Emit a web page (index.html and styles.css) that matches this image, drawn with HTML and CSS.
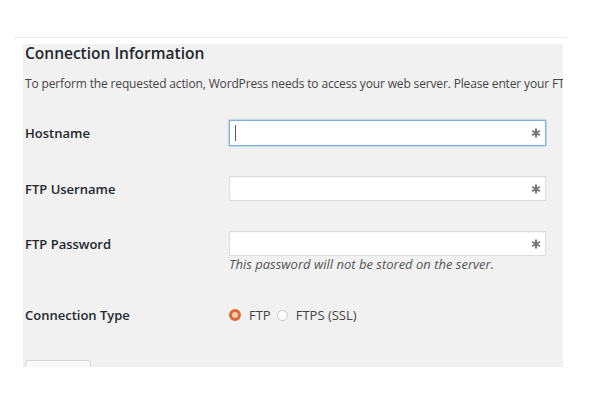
FILE: index.html
```html
<!DOCTYPE html>
<html><head>
<meta charset="UTF-8">
<title>Connection Information</title>
<link rel="stylesheet" href="styles.css">
</head>
<body>

<div class="page">
	<div class="rule"></div>

	<div class="panel">
		<h2 class="title">Connection Information</h2>
		<p class="intro">To perform the requested action, WordPress needs to access your web server. Please enter your FTP credentials to proceed.</p>

		<div class="form">
			<div class="row">
				<label class="label">Hostname</label>
				<div class="field focused"><span class="caret"></span><svg class="key" width="10" height="10" viewBox="0 0 10 10"><path d="M5 0.5V9.5M1.1 2.75L8.9 7.25M1.1 7.25L8.9 2.75"/></svg></div>
			</div>

			<div class="row">
				<label class="label">FTP Username</label>
				<div class="field"><span></span><svg class="key" width="10" height="10" viewBox="0 0 10 10"><path d="M5 0.5V9.5M1.1 2.75L8.9 7.25M1.1 7.25L8.9 2.75"/></svg></div>
			</div>

			<div class="row row_last">
				<label class="label">FTP Password</label>
				<div class="field"><span></span><svg class="key" width="10" height="10" viewBox="0 0 10 10"><path d="M5 0.5V9.5M1.1 2.75L8.9 7.25M1.1 7.25L8.9 2.75"/></svg></div>
			</div>
			<div class="hint">This password will not be stored on the server.</div>

			<div class="row row_type">
				<label class="label">Connection Type</label>
				<div class="choices">
					<span class="radio checked"></span><span class="choice">FTP</span>
					<span class="radio"></span><span class="choice">FTPS (SSL)</span>
				</div>
			</div>
		</div>

		<div class="button"></div>
	</div>
</div>

</body></html>
```

FILE: styles.css
```css
BODY {
	margin:0px;
	padding:0px;
	background:#ffffff;
	font-family:"Open Sans", "Noto Sans", sans-serif;
	color:#32373c;
}

.page {
	padding-top:37px;
}

.rule {
	margin-left:14px;
	width:553px;
	height:1px;
	background:#ececec;
}

/* grey settings box */
.panel {
	margin-left:23px;
	margin-top:6px;
	width:538px;
	height:323px;
	padding-left:2px;
	overflow:hidden;
	background:#f1f1f1;
}

.title {
	margin:0px;
	font-size:15.5px;
	line-height:18px;
	font-weight:600;
	color:#23282d;
}

.intro {
	margin:13px 0px 0px 0px;
	font-size:12px;
	line-height:18px;
	letter-spacing:-0.15px;
	white-space:nowrap;
	color:#444444;
}

.form {
	margin-top:27px;
}

.row {
	display:grid;
	grid-template-columns:204px 317px;
	align-items:center;
	margin-bottom:30px;
}

.row_last {
	margin-bottom:0px;
}

.label {
	font-size:13px;
	font-weight:600;
	color:#23282d;
}

.field {
	height:23px;
	display:flex;
	align-items:center;
	justify-content:space-between;
	padding:0px 4px 0px 5px;
	border:1px solid #dddddd;
	background:#ffffff;
	box-shadow:inset 0 1px 2px rgba(0,0,0,0.04);
}

.focused {
	height:24px;
	border-color:#7fb0dd;
	box-shadow:0 0 2px rgba(30,140,190,0.6);
}

.caret {
	width:1px;
	height:16px;
	background:#555555;
}

.key {
	stroke:#777777;
	stroke-width:2;
	fill:none;
}

.hint {
	margin-left:204px;
	font-size:13px;
	line-height:16px;
	font-style:italic;
	color:#555555;
}

.row_type {
	margin-top:33px;
	margin-bottom:0px;
	height:20px;
}

.choices {
	display:flex;
	align-items:center;
	font-size:13px;
	color:#444444;
}

.radio {
	width:11px;
	height:11px;
	border:1px solid #c8c8c8;
	border-radius:50%;
	background:#ffffff;
	margin-right:8px;
	box-sizing:border-box;
}

.checked {
	border:3px solid #dd6a34;
	background:#f7c9b1;
	width:12px;
	height:12px;
}

.choice {
	margin-right:6px;
}

.button {
	margin-top:35px;
	width:64px;
	height:24px;
	border:1px solid #d6d6d6;
	border-radius:3px;
	background:#f9f9f9;
}
```
